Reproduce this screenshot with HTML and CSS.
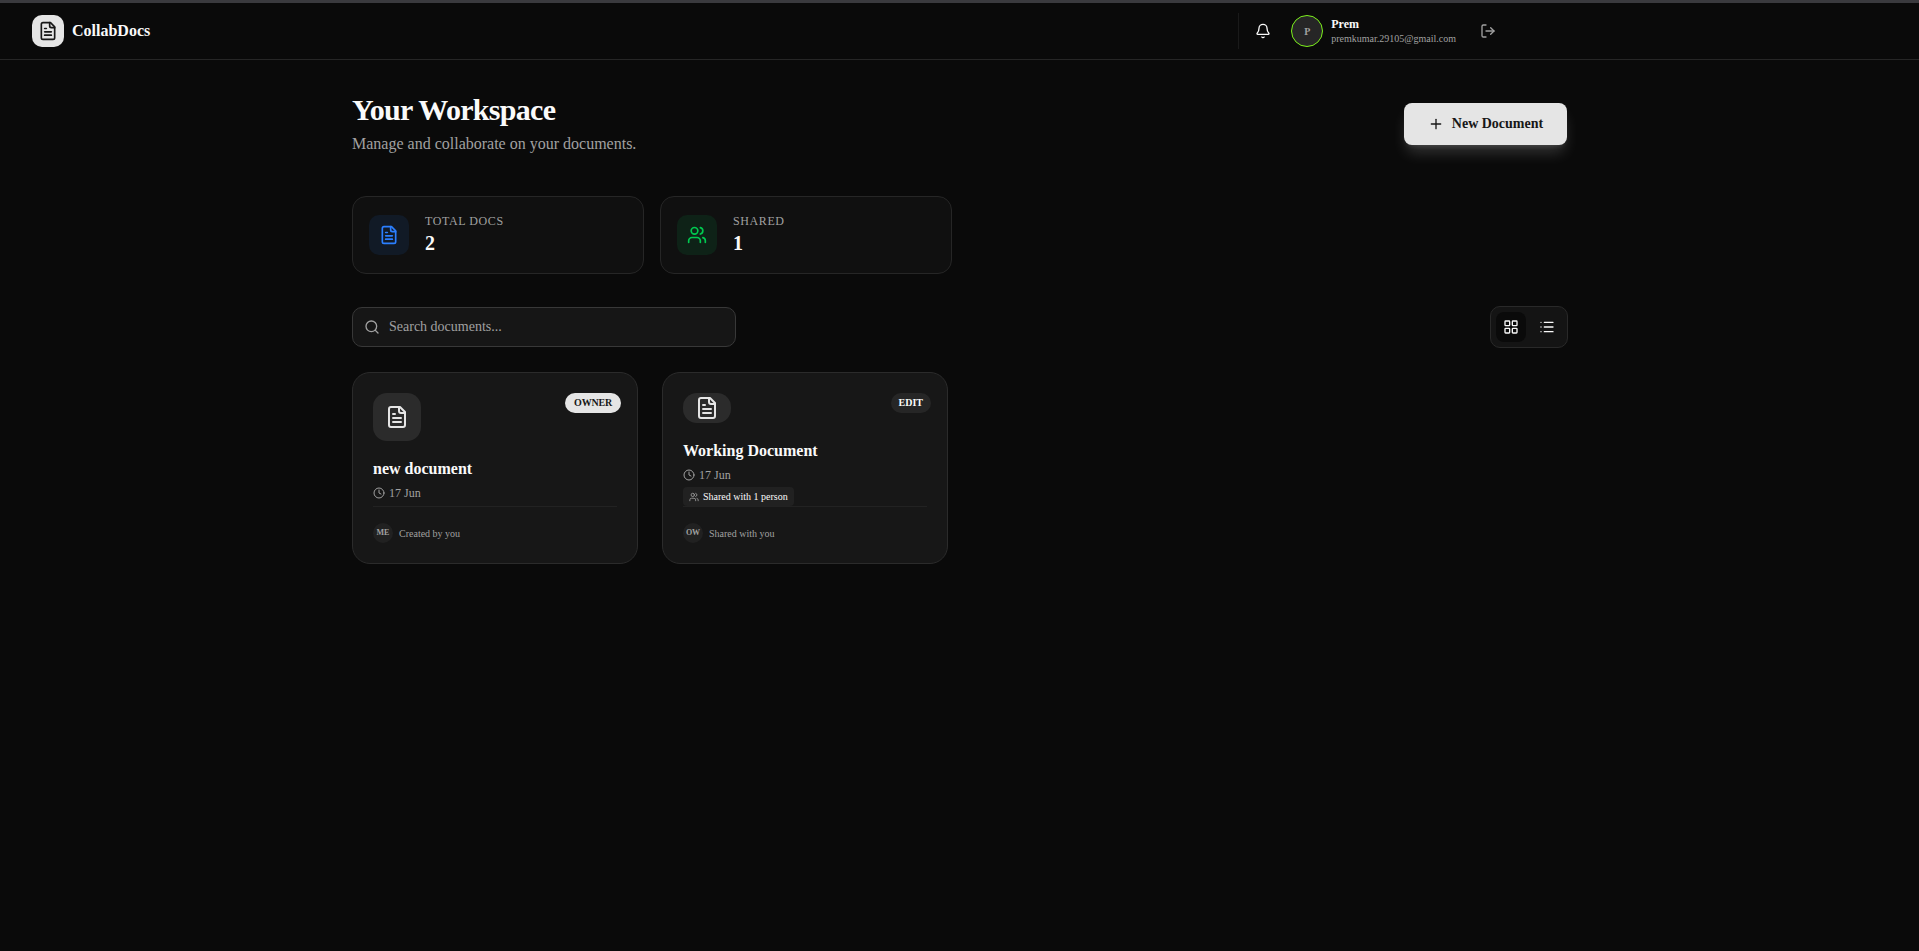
FILE: index.html
```
<!DOCTYPE html>
<html lang="en">
  <head>
    <meta charset="UTF-8" />
    <meta name="viewport" content="width=device-width, initial-scale=1.0" />
    <title>CollabDocs</title>
    <link rel="stylesheet" href="styles.css">
  </head>
  <body>
    <!-- Shared icons -->
    <svg class="sprite">
      <symbol id="icon-doc" viewBox="0 0 24 24">
        <path d="M15 2H6a2 2 0 0 0-2 2v16a2 2 0 0 0 2 2h12a2 2 0 0 0 2-2V7Z" />
        <path d="M14 2v4a2 2 0 0 0 2 2h4" />
        <path d="M10 9H8" />
        <path d="M16 13H8" />
        <path d="M16 17H8" />
      </symbol>
      <symbol id="icon-users" viewBox="0 0 24 24">
        <path d="M16 21v-2a4 4 0 0 0-4-4H6a4 4 0 0 0-4 4v2" />
        <circle cx="9" cy="7" r="4" />
        <path d="M22 21v-2a4 4 0 0 0-3-3.87" />
        <path d="M16 3.13a4 4 0 0 1 0 7.75" />
      </symbol>
      <symbol id="icon-clock" viewBox="0 0 24 24">
        <circle cx="12" cy="12" r="10" />
        <path d="M12 6v6l4 2" />
      </symbol>
    </svg>

    <header class="header">
      <div class="brand">
        <div class="brand-icon">
          <svg class="icon icon-20"><use href="#icon-doc" /></svg>
        </div>
        <span class="brand-name">CollabDocs</span>
      </div>
      <div class="account">
        <button class="icon-btn bell" aria-label="Notifications">
          <svg class="icon icon-16" viewBox="0 0 24 24">
            <path d="M10.3 21a1.94 1.94 0 0 0 3.4 0" />
            <path d="M3.26 15.33A1 1 0 0 0 4 17h16a1 1 0 0 0 .74-1.67C19.41 13.96 18 12.5 18 8A6 6 0 0 0 6 8c0 4.5-1.41 5.96-2.74 7.33" />
          </svg>
        </button>
        <div class="avatar">P</div>
        <div class="user">
          <span class="user-name">Prem</span>
          <span class="user-email">premkumar.29105@gmail.com</span>
        </div>
        <button class="icon-btn logout" aria-label="Log out">
          <svg class="icon icon-16" viewBox="0 0 24 24">
            <path d="M9 21H5a2 2 0 0 1-2-2V5a2 2 0 0 1 2-2h4" />
            <path d="m16 17 5-5-5-5" />
            <path d="M21 12H9" />
          </svg>
        </button>
      </div>
    </header>

    <main class="container">
      <div class="page-head">
        <div>
          <h1>Your Workspace</h1>
          <p class="subtitle">Manage and collaborate on your documents.</p>
        </div>
        <button class="new-btn">
          <svg class="icon icon-16" viewBox="0 0 24 24">
            <path d="M5 12h14" />
            <path d="M12 5v14" />
          </svg>
          New Document
        </button>
      </div>

      <div class="stats">
        <div class="stat">
          <div class="stat-icon blue">
            <svg class="icon icon-20"><use href="#icon-doc" /></svg>
          </div>
          <div>
            <p class="stat-label">TOTAL DOCS</p>
            <p class="stat-value">2</p>
          </div>
        </div>
        <div class="stat">
          <div class="stat-icon green">
            <svg class="icon icon-20"><use href="#icon-users" /></svg>
          </div>
          <div>
            <p class="stat-label">SHARED</p>
            <p class="stat-value">1</p>
          </div>
        </div>
      </div>

      <div class="toolbar">
        <label class="search">
          <svg class="icon icon-16" viewBox="0 0 24 24">
            <circle cx="11" cy="11" r="8" />
            <path d="m21 21-4.3-4.3" />
          </svg>
          <input type="text" placeholder="Search documents..." />
        </label>
        <div class="view-toggle">
          <button class="view-btn active" aria-label="Grid view">
            <svg class="icon icon-16" viewBox="0 0 24 24">
              <rect x="3" y="3" width="7" height="7" rx="1" />
              <rect x="14" y="3" width="7" height="7" rx="1" />
              <rect x="14" y="14" width="7" height="7" rx="1" />
              <rect x="3" y="14" width="7" height="7" rx="1" />
            </svg>
          </button>
          <button class="view-btn" aria-label="List view">
            <svg class="icon icon-16" viewBox="0 0 24 24">
              <path d="M3 5h.01M3 12h.01M3 19h.01M8 5h13M8 12h13M8 19h13" />
            </svg>
          </button>
        </div>
      </div>

      <div class="docs">
        <article class="doc">
          <span class="badge badge-owner">OWNER</span>
          <div class="doc-icon">
            <svg class="icon icon-24"><use href="#icon-doc" /></svg>
          </div>
          <h3>new document</h3>
          <div class="date">
            <svg class="icon icon-12"><use href="#icon-clock" /></svg>
            <span>17 Jun</span>
          </div>
          <div class="doc-footer">
            <span class="mini-avatar">ME</span>
            <span>Created by you</span>
          </div>
        </article>

        <article class="doc">
          <span class="badge">EDIT</span>
          <div class="doc-icon">
            <svg class="icon icon-24"><use href="#icon-doc" /></svg>
          </div>
          <h3>Working Document</h3>
          <div class="date">
            <svg class="icon icon-12"><use href="#icon-clock" /></svg>
            <span>17 Jun</span>
          </div>
          <div class="shared">
            <svg class="icon icon-10"><use href="#icon-users" /></svg>
            <span>Shared with 1 person</span>
          </div>
          <div class="doc-footer">
            <span class="mini-avatar">OW</span>
            <span>Shared with you</span>
          </div>
        </article>
      </div>
    </main>
  </body>
</html>
```
FILE: styles.css
```
* {
  box-sizing: border-box;
}
body {
  margin: 0;
  min-height: 100vh;
  border-top: 3px solid #3a3a3e;
  background-color: #0a0a0a;
  color: #fafafa;
  font-family: "Liberation Serif", "Times New Roman", serif;
}
h1,
h3,
p {
  margin: 0;
}
button {
  display: flex;
  align-items: center;
  justify-content: center;
  padding: 0;
  border: none;
  background: transparent;
  color: inherit;
  font-family: inherit;
  cursor: pointer;
}

/* Icons */
.sprite {
  display: none;
}
.icon {
  display: block;
  flex-shrink: 0;
  fill: none;
  stroke: currentColor;
  stroke-width: 2;
  stroke-linecap: round;
  stroke-linejoin: round;
}
.icon-10 {
  width: 10px;
  height: 10px;
}
.icon-12 {
  width: 12px;
  height: 12px;
}
.icon-16 {
  width: 16px;
  height: 16px;
}
.icon-20 {
  width: 20px;
  height: 20px;
}
.icon-24 {
  width: 24px;
  height: 24px;
}

/* Header */
.header {
  display: flex;
  align-items: center;
  justify-content: space-between;
  height: 57px;
  padding: 0 423px 0 32px;
  border-bottom: 1px solid #262626;
}
.brand {
  display: flex;
  align-items: center;
  gap: 8px;
}
.brand-icon {
  display: flex;
  align-items: center;
  justify-content: center;
  width: 32px;
  height: 32px;
  border-radius: 10px;
  background-color: #e5e5e5;
  color: #171717;
}
.brand-name {
  font-size: 16px;
  font-weight: 700;
  line-height: 24px;
}
.account {
  display: flex;
  align-items: center;
  height: 36px;
  border-left: 1px solid #1a1a1a;
}
.icon-btn {
  width: 16px;
  height: 16px;
}
.bell {
  margin: 0 20px 0 16px;
}
.avatar {
  display: flex;
  align-items: center;
  justify-content: center;
  width: 32px;
  height: 32px;
  margin-right: 8px;
  border: 1px solid #7cf01c;
  border-radius: 50%;
  background-color: #262626;
  color: #a1a1a1;
  font-size: 10px;
  font-weight: 700;
}
.user {
  display: flex;
  flex-direction: column;
}
.user-name {
  padding-top: 1px;
  font-size: 12px;
  font-weight: 700;
  line-height: 14px;
}
.user-email {
  color: #a1a1a1;
  font-size: 10px;
  line-height: 15px;
}
.logout {
  margin-left: 24px;
  color: #a1a1a1;
}

/* Page */
.container {
  width: 1216px;
  margin: 0 0 0 352px;
  padding-top: 32px;
}
.page-head {
  display: flex;
  align-items: center;
  justify-content: space-between;
  height: 64px;
  padding-right: 1px;
}
h1 {
  font-size: 30px;
  font-weight: 700;
  line-height: 36px;
  letter-spacing: -0.7px;
}
.subtitle {
  margin-top: 4px;
  color: #a1a1a1;
  font-size: 16px;
  line-height: 24px;
}
.new-btn {
  gap: 8px;
  width: 163px;
  height: 42px;
  border-radius: 8px;
  background-color: #e5e5e5;
  color: #171717;
  font-size: 14px;
  font-weight: 700;
  box-shadow: 0 10px 15px -3px rgba(229, 229, 229, 0.2),
    0 4px 6px -4px rgba(229, 229, 229, 0.2);
}

/* Stats */
.stats {
  display: grid;
  grid-template-columns: repeat(4, 1fr);
  gap: 16px;
  margin-top: 40px;
}
.stat {
  display: flex;
  align-items: center;
  gap: 16px;
  height: 78px;
  padding: 0 16px;
  border: 1px solid #262626;
  border-radius: 14px;
  background-color: #101010;
}
.stat-icon {
  display: flex;
  align-items: center;
  justify-content: center;
  width: 40px;
  height: 40px;
  border-radius: 10px;
}
.blue {
  background-color: #111a26;
  color: #2b7fff;
}
.green {
  background-color: #0e2217;
  color: #00c950;
}
.stat-label {
  color: #a1a1a1;
  font-size: 12px;
  line-height: 16px;
  letter-spacing: 0.6px;
}
.stat-value {
  font-size: 20px;
  font-weight: 700;
  line-height: 28px;
}

/* Search and view switch */
.toolbar {
  display: flex;
  align-items: center;
  justify-content: space-between;
  margin-top: 32px;
}
.search {
  display: flex;
  align-items: center;
  gap: 9px;
  width: 384px;
  height: 40px;
  padding: 0 11px;
  border: 1px solid #383838;
  border-radius: 10px;
  background-color: #161616;
  color: #a1a1a1;
}
.search input {
  flex: 1;
  padding: 0;
  border: none;
  outline: none;
  background: transparent;
  color: #fafafa;
  font-family: inherit;
  font-size: 14px;
}
.search input::placeholder {
  color: #a1a1a1;
}
.view-toggle {
  display: flex;
  gap: 6px;
  padding: 5px;
  border: 1px solid #292929;
  border-radius: 10px;
  background-color: #141414;
}
.view-btn {
  width: 30px;
  height: 30px;
  border-radius: 8px;
}
.view-btn.active {
  background-color: #0a0a0a;
}

/* Document cards */
.docs {
  display: grid;
  grid-template-columns: repeat(4, 1fr);
  gap: 24px;
  margin-top: 24px;
}
.doc {
  position: relative;
  display: flex;
  flex-direction: column;
  height: 192px;
  padding: 20px;
  border: 1px solid #2b2b2b;
  border-radius: 18px;
  background-color: #171717;
}
.doc-icon {
  display: flex;
  align-items: center;
  justify-content: center;
  width: 48px;
  height: 48px;
  min-height: 0;
  margin-bottom: 16px;
  border-radius: 14px;
  background-color: #2b2b2b;
  color: #e5e5e5;
}
.doc:has(.shared) .doc-icon {
  height: 30px;
}
.badge {
  position: absolute;
  top: 20px;
  right: 16px;
  height: 20px;
  padding: 0 8px;
  border-radius: 10px;
  background-color: #262626;
  font-size: 10px;
  font-weight: 700;
  line-height: 20px;
}
.badge-owner {
  padding: 0 9px;
  background-color: #e5e5e5;
  color: #171717;
  letter-spacing: -0.2px;
}
h3 {
  font-size: 16px;
  font-weight: 700;
  line-height: 24px;
}
.date {
  display: flex;
  align-items: center;
  gap: 4px;
  margin-top: 4px;
  color: #a1a1a1;
  font-size: 12px;
  line-height: 16px;
}
.shared {
  display: flex;
  align-items: center;
  align-self: flex-start;
  gap: 4px;
  height: 19px;
  margin-top: 4px;
  padding: 0 6px;
  border-radius: 4px;
  background-color: #212121;
  color: #fafafa;
  font-size: 10px;
  font-weight: 500;
}
.shared .icon {
  color: #a1a1a1;
}
.doc-footer {
  display: flex;
  align-items: center;
  gap: 6px;
  margin-top: auto;
  padding-top: 16px;
  border-top: 1px solid #222222;
  color: #a1a1a1;
  font-size: 10px;
}
.mini-avatar {
  width: 20px;
  height: 20px;
  border-radius: 50%;
  background-color: #212121;
  font-size: 8px;
  font-weight: 700;
  line-height: 19px;
  text-align: center;
}
```
